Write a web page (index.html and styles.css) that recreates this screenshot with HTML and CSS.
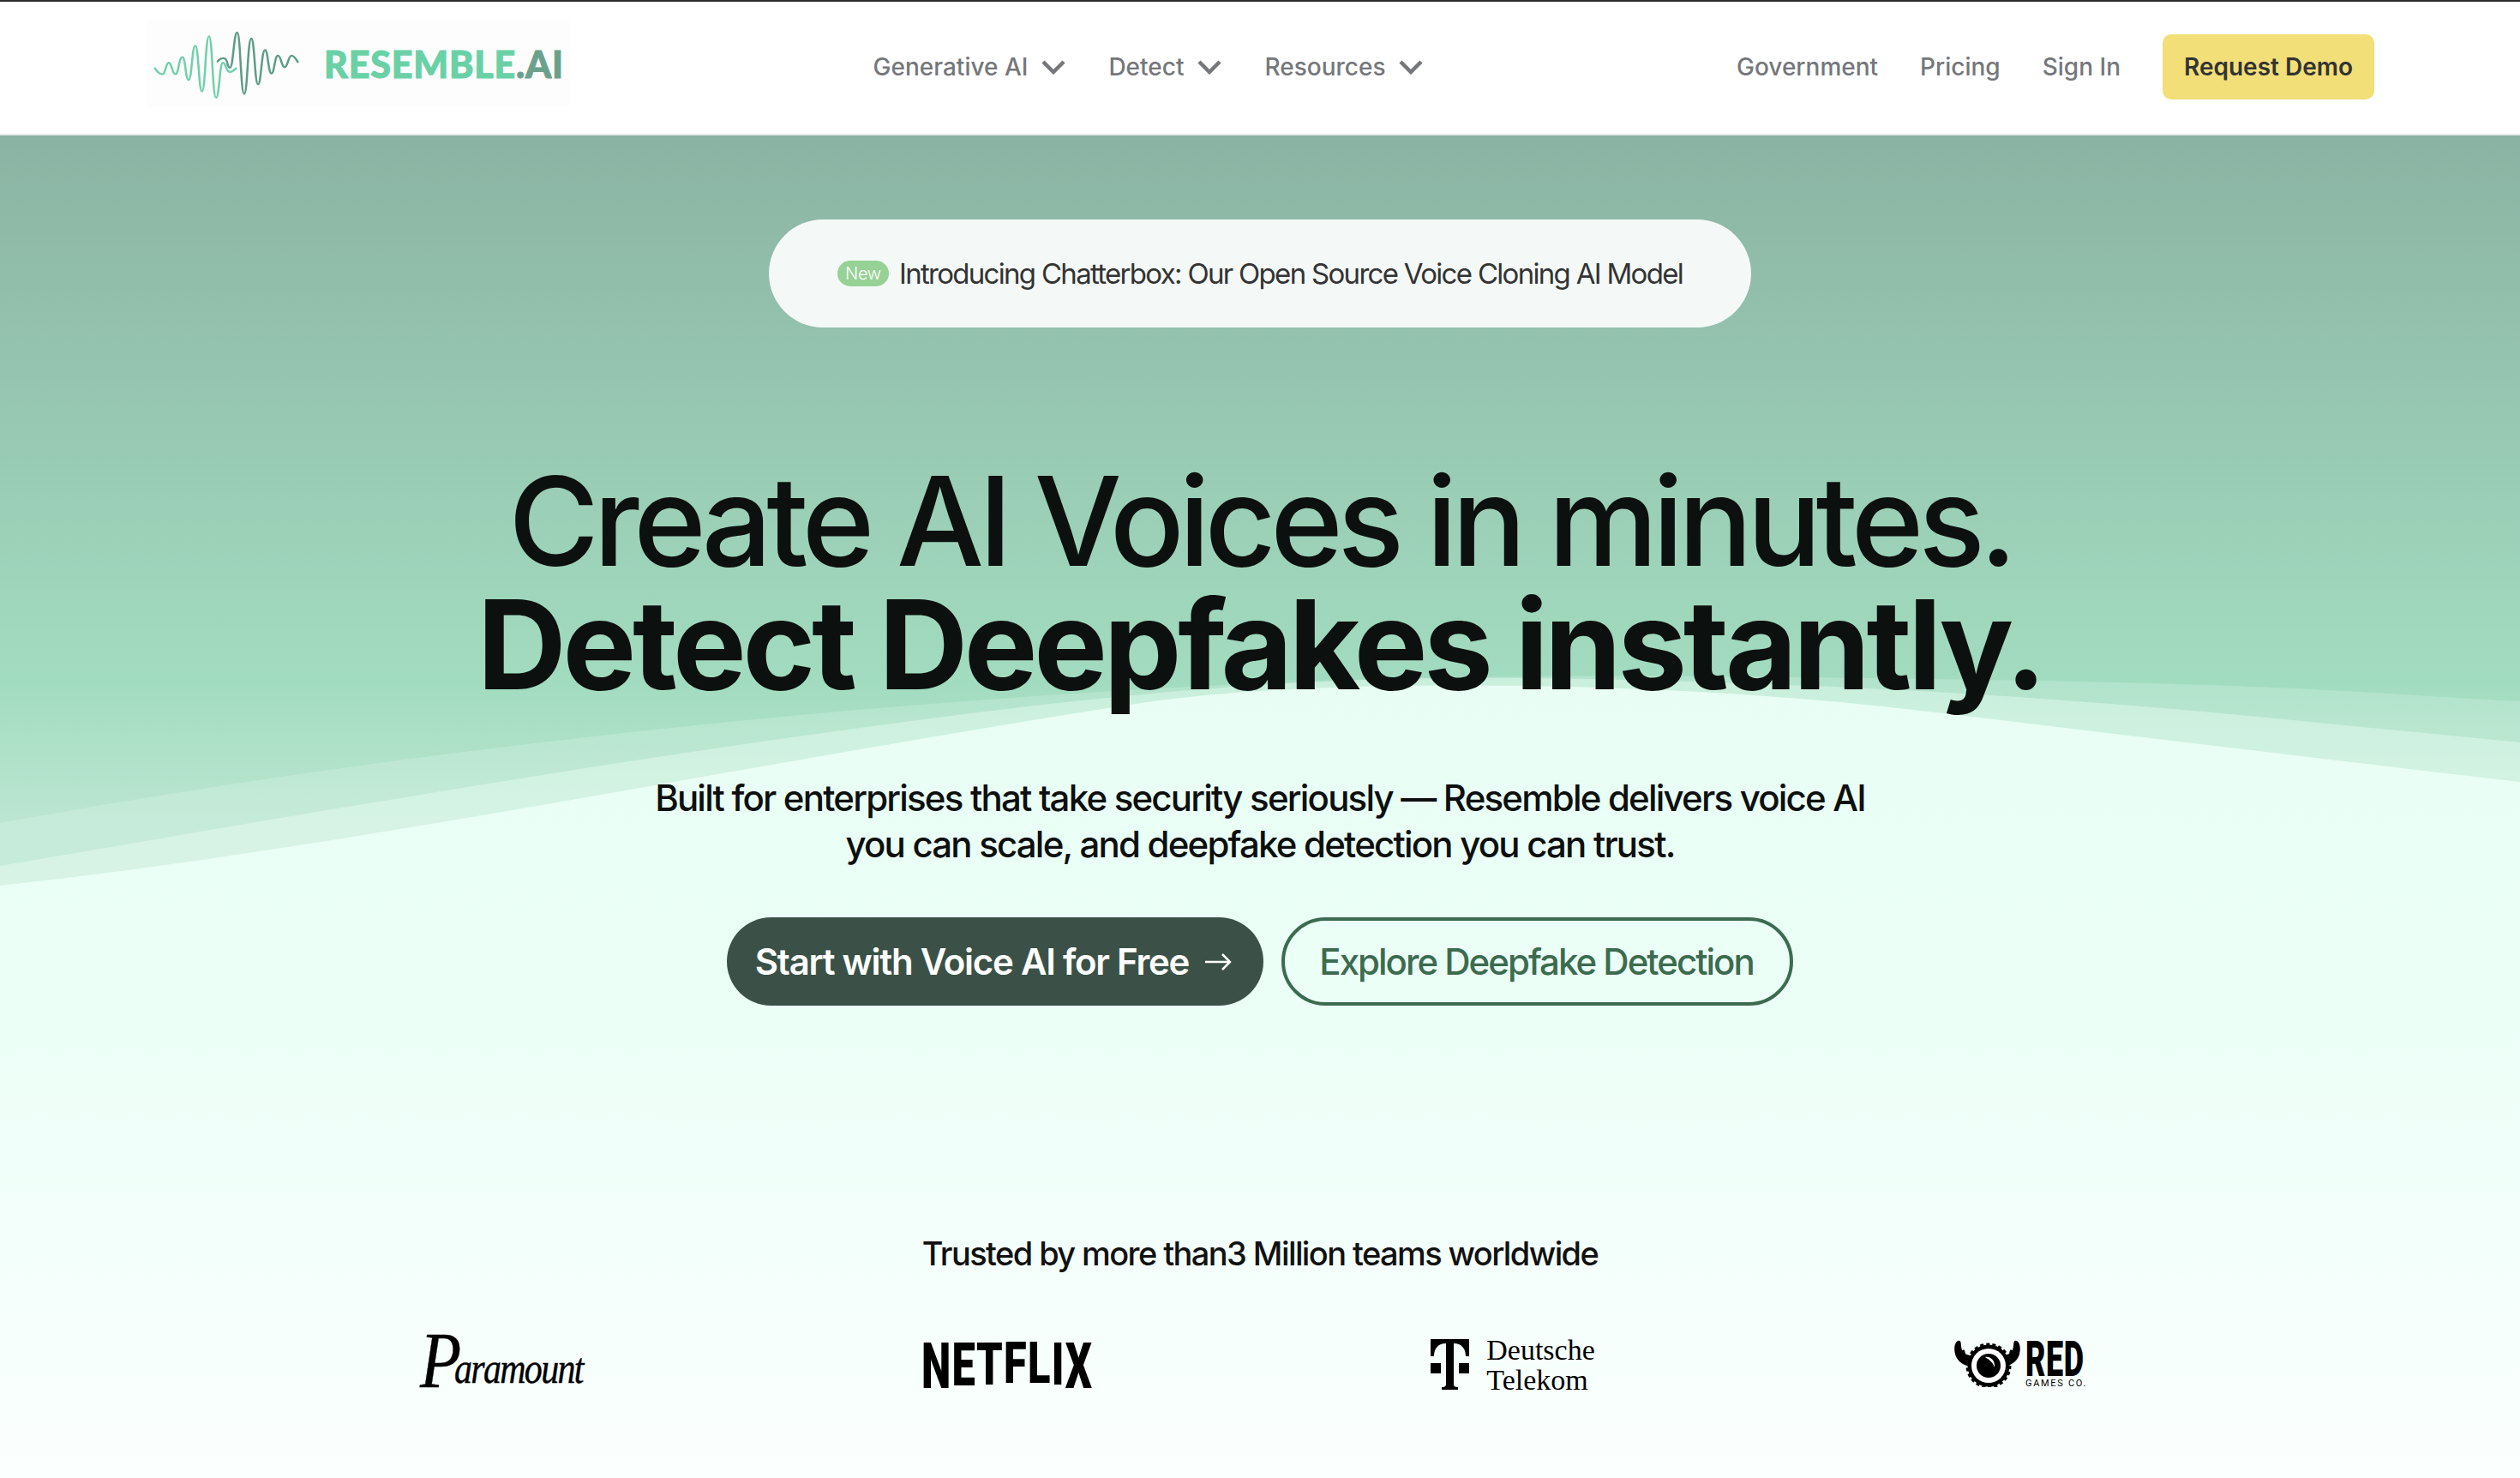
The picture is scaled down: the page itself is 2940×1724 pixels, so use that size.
FILE: index.html
```html
<!DOCTYPE html>
<html lang="en">
<head>
<meta charset="utf-8">
<title>Resemble AI</title>
<link rel="stylesheet" href="styles.css">
</head>
<body>
<header class="topbar">
  <a class="brand" href="#">
    <svg class="brand-wave" viewBox="0 0 200 101" aria-hidden="true">
      <g transform="scale(.357 .333) translate(-30 -70)">
        <path class="wave-light" d="M60 237C68 250 75 258 85 258C95 258 95 218 105 218C116 218 116 258 127 258C138 258 138 198 150 198C160 198 160 278 170 278C181 278 181 158 192 158C203 158 203 318 214 318C225 318 225 125 237 125C248 125 248 340 260 340C271 340 271 218 282 218C293 218 292 250 305 250C315 250 320 243 325 237"/>
        <path class="wave-dark" d="M265 213C272 204 280 200 288 203C300 208 295 235 305 235C317 235 317 112 329 112C340 112 340 327 352 327C363 327 363 133 375 133C386 133 386 293 397 293C408 293 408 173 420 173C430 173 430 255 441 255C451 255 451 193 462 193C473 193 473 233 484 233C495 233 495 193 507 193C515 193 521 205 527 215"/>
      </g>
    </svg>
    <span class="brand-name">RESEMBLE<span class="brand-ai">.AI</span></span>
  </a>
  <nav class="menu">
    <a class="menu-item" href="#">Generative AI<svg class="chev" viewBox="0 0 28 18"><path d="M2 3l12 12L26 3"/></svg></a>
    <a class="menu-item" href="#">Detect<svg class="chev" viewBox="0 0 28 18"><path d="M2 3l12 12L26 3"/></svg></a>
    <a class="menu-item" href="#">Resources<svg class="chev" viewBox="0 0 28 18"><path d="M2 3l12 12L26 3"/></svg></a>
  </nav>
  <div class="actions">
    <a class="action-link" href="#">Government</a>
    <a class="action-link" href="#">Pricing</a>
    <a class="action-link" href="#">Sign In</a>
    <a class="demo" href="#">Request Demo</a>
  </div>
</header>

<main class="hero">
  <svg class="waves" viewBox="0 158 2940 1566" preserveAspectRatio="none" aria-hidden="true">
    <defs>
      <linearGradient id="frontFill" gradientUnits="userSpaceOnUse" x1="0" y1="800" x2="0" y2="1724">
        <stop offset="0" stop-color="#e8fef4"/>
        <stop offset=".4" stop-color="#ebfff7"/>
        <stop offset="1" stop-color="#fbfffe"/>
      </linearGradient>
    </defs>
    <path class="wave-back" d="M0 960C300 905 700 850 1125 818S1800 785 2250 792S2700 805 2940 818V1724H0Z"/>
    <path class="wave-mid" d="M0 1010C350 950 750 880 1125 833S1700 785 2062 798S2650 838 2940 866V1724H0Z"/>
    <path class="wave-front" fill="url(#frontFill)" d="M0 1033C400 990 850 895 1312 823C1450 800 1640 798 1781 800C1950 803 2100 812 2250 830C2500 860 2750 890 2940 912V1724H0Z"/>
  </svg>

  <div class="hero-inner">
    <a class="announce" href="#"><span class="badge">New</span><span>Introducing Chatterbox: Our Open Source Voice Cloning AI Model</span></a>
    <h1 class="headline">Create AI Voices in minutes.<strong class="headline-strong">Detect Deepfakes instantly.</strong></h1>
    <p class="lede">Built for enterprises that take security seriously — Resemble delivers voice AI<br>you can scale, and deepfake detection you can trust.</p>
    <div class="cta-row">
      <a class="cta cta-solid" href="#">Start with Voice AI for Free<svg class="arrow" viewBox="0 0 32 24"><path d="M1 12h29M21 3l9 9-9 9"/></svg></a>
      <a class="cta cta-ghost" href="#">Explore Deepfake Detection</a>
    </div>
    <p class="trusted">Trusted by more than3 Million teams worldwide</p>
    <div class="logos">
      <div class="logo-cell"><span class="paramount"><span class="paramount-p">P</span>aramount</span></div>
      <div class="logo-cell"><span class="netflix"><span class="nf1">N</span><span class="nf2">E</span><span class="nf3">T</span><span class="nf4">F</span><span class="nf4">L</span><span class="nf3">I</span><span class="nf1">X</span></span></div>
      <div class="logo-cell telekom">
        <svg class="t-mark" viewBox="0 0 45 60"><path d="M0 0H45V20H41C41 11 36 5 27 5V52C27 55 28 56 32 56V59H13V56C17 56 18 55 18 52V5C9 5 4 11 4 20H0Z"/><path d="M0 28H12V40H0ZM33 28H45V40H33Z"/></svg>
        <span class="t-name">Deutsche<br>Telekom</span>
      </div>
      <div class="logo-cell redgames">
        <svg class="red-mark" viewBox="0 0 78 56">
          <path class="m-horn" d="M5.3 2C1 4 0 12 2.7 19.7C6 27 12 30 17 31.3L23.7 19.7C18 19 14 18 13.7 16.3C13.5 13 12 11 11 13C10 14 9 10 8.7 4.7C8.5 2.5 7 1 5.3 2Z"/>
          <path class="m-horn" transform="matrix(-1 0 0 1 79 0)" d="M5.3 2C1 4 0 12 2.7 19.7C6 27 12 30 17 31.3L23.7 19.7C18 19 14 18 13.7 16.3C13.5 13 12 11 11 13C10 14 9 10 8.7 4.7C8.5 2.5 7 1 5.3 2Z"/>
          <circle class="m-fur" cx="41" cy="31" r="24.5"/>
          <circle class="m-white" cx="41" cy="31" r="20"/>
          <circle class="m-ink" cx="41" cy="31" r="14"/>
          <path class="m-white" d="M37 21C43 20 49 25 48 33C46 27 42 24 37 21Z"/>
        </svg>
        <span class="red-text"><span class="red-word">RED</span><span class="red-sub">GAMES CO.</span></span>
      </div>
    </div>
  </div>
</main>
</body>
</html>
```

FILE: styles.css
```css
* { box-sizing: border-box; }
html, body { margin: 0; padding: 0; }
body {
  font-family: Inter, "Liberation Sans", sans-serif;
  width: 2940px;
  height: 1724px;
  overflow: hidden;
  background: #fbfffe;
  color: #0d0f0e;
}
a { text-decoration: none; color: inherit; }

.topbar {
  height: 158px;
  padding: 0 170px 2px;
  border-top: 2px solid #2b2b2b;
  border-bottom: 2px solid #e6e9e7;
  background: #fff;
  display: flex;
  align-items: center;
  justify-content: space-between;
}
.brand {
  width: 495px;
  height: 101px;
  background: #fdfdfd;
  margin-top: -7px;
  display: flex;
  align-items: center;
  gap: 8px;
}
.brand-wave { width: 200px; height: 101px; flex: none; }
.wave-light, .wave-dark { fill: none; stroke-width: 7; stroke-linecap: round; }
.wave-light { stroke: #6fd0a9; }
.wave-dark { stroke: #5d9c86; }
.brand-name {
  font-family: Lato, sans-serif;
  font-weight: 900;
  font-size: 43px;
  letter-spacing: .8px;
  color: #6ad1a6;
  -webkit-text-stroke: 1px #6ad1a6;
}
.brand-ai { color: #6ba18c; -webkit-text-stroke: 1px #6ba18c; }

.menu { display: flex; gap: 50px; margin-right: 12px; }
.menu-item, .action-link {
  font-size: 28px;
  font-weight: 500;
  color: #75777b;
}
.menu-item { display: flex; align-items: center; gap: 16px; }
.chev { width: 28px; height: 18px; fill: none; stroke: #75777b; stroke-width: 4.5; }

.actions { display: flex; align-items: center; gap: 49px; }
.demo {
  width: 247px;
  height: 76px;
  border-radius: 10px;
  background: #f2df78;
  color: #333;
  font-size: 28px;
  font-weight: 600;
  display: flex;
  align-items: center;
  justify-content: center;
}

.hero {
  position: relative;
  height: 1566px;
  background: linear-gradient(180deg, #8bb3a3 0, #a2dcc0 640px, #bde6d2 810px, #bde6d2 100%);
  overflow: hidden;
}
.waves { position: absolute; left: 0; top: 0; width: 2940px; height: 1566px; }
.wave-back { fill: rgba(235, 255, 245, .22); }
.wave-mid { fill: rgba(235, 255, 245, .42); }

.hero-inner {
  position: relative;
  display: flex;
  flex-direction: column;
  align-items: center;
  padding-top: 98px;
}
.announce {
  width: 1146px;
  height: 126px;
  border-radius: 63px;
  background: #f4f9f7;
  color: #333;
  font-size: 33px;
  letter-spacing: -1.7px;
  display: flex;
  align-items: center;
  justify-content: center;
  gap: 12px;
}
.badge {
  width: 60px;
  height: 30px;
  border-radius: 15px;
  background: #96d195;
  color: #fff;
  font-size: 20px;
  font-weight: 300;
  letter-spacing: -.3px;
  display: flex;
  align-items: center;
  justify-content: center;
}
.headline {
  margin: 154px 0 0;
  font-size: 144px;
  line-height: 144px;
  font-weight: 500;
  letter-spacing: -6.3px;
  text-align: center;
  color: #0c100e;
}
.headline-strong { display: block; font-weight: 700; letter-spacing: -4.3px; }
.lede {
  margin: 80px 0 0;
  font-size: 42px;
  line-height: 54px;
  font-weight: 450;
  letter-spacing: -1.8px;
  text-align: center;
  color: #0d0f0e;
}
.cta-row { margin-top: 58px; display: flex; gap: 21px; }
.cta {
  height: 103px;
  border-radius: 52px;
  font-size: 42px;
  display: flex;
  align-items: center;
  justify-content: center;
}
.cta-solid { width: 626px; background: #3b5147; color: #fff; font-weight: 600; gap: 17px; letter-spacing: -1.25px; padding-right: 3px; }
.arrow { width: 34px; height: 24px; fill: none; stroke: #fff; stroke-width: 2.5; }
.cta-ghost { width: 597px; padding-right: 2px; border: 4px solid #3d6b4f; color: #3d6b4f; font-weight: 500; letter-spacing: -2px; }
.trusted {
  margin: 266px 0 0;
  font-size: 38px;
  line-height: 46px;
  font-weight: 500;
  letter-spacing: -1.6px;
  color: #111;
}
.logos {
  margin-top: 73px;
  width: 2360px;
  display: grid;
  grid-template-columns: repeat(4, 1fr);
  color: #000;
}
.logo-cell { display: flex; align-items: center; justify-content: center; height: 70px; }
.paramount {
  font-family: "Liberation Serif", serif;
  font-style: italic;
  font-size: 50px;
  letter-spacing: -2px;
  -webkit-text-stroke: .4px #000;
  transform: scaleX(.84);
}
.paramount-p { font-size: 94px; line-height: 50px; vertical-align: -5px; margin-right: -8px; }
.netflix {
  font-family: Roboto, "Liberation Sans", sans-serif;
  font-weight: 900;
  font-size: 75px;
  line-height: 60px;
  letter-spacing: 2px;
  display: inline-flex;
  align-items: flex-start;
  transform: scaleX(.65);
}
.netflix span { display: inline-block; transform-origin: 50% 6px; }
.nf1 { transform: scaleY(1); }
.nf2 { transform: scaleY(.94); }
.nf3 { transform: scaleY(.91); }
.nf4 { transform: scaleY(.88); }
.telekom { gap: 20px; padding-bottom: 3px; }
.t-mark { width: 45px; height: 60px; }
.t-name {
  font-family: "Liberation Serif", serif;
  font-size: 34px;
  line-height: 35px;
}
.redgames { gap: 6px; padding-top: 4px; align-items: flex-start; }
.red-mark { width: 78px; height: 56px; }
.m-horn, .m-ink { fill: #000; }
.m-white { fill: #fff; }
.m-fur { fill: #000; stroke: #000; stroke-width: 4; stroke-dasharray: 4 3; }
.red-text { display: flex; flex-direction: column; width: 68px; }
.red-word {
  font-family: Roboto, "Liberation Sans", sans-serif;
  font-weight: 900;
  font-size: 58px;
  line-height: 46px;
  letter-spacing: 1px;
  transform: scaleX(.62);
  transform-origin: 0 50%;
  white-space: nowrap;
}
.red-sub {
  font-family: Roboto, "Liberation Sans", sans-serif;
  font-size: 11px;
  line-height: 12px;
  letter-spacing: 1.7px;
  white-space: nowrap;
}
```
